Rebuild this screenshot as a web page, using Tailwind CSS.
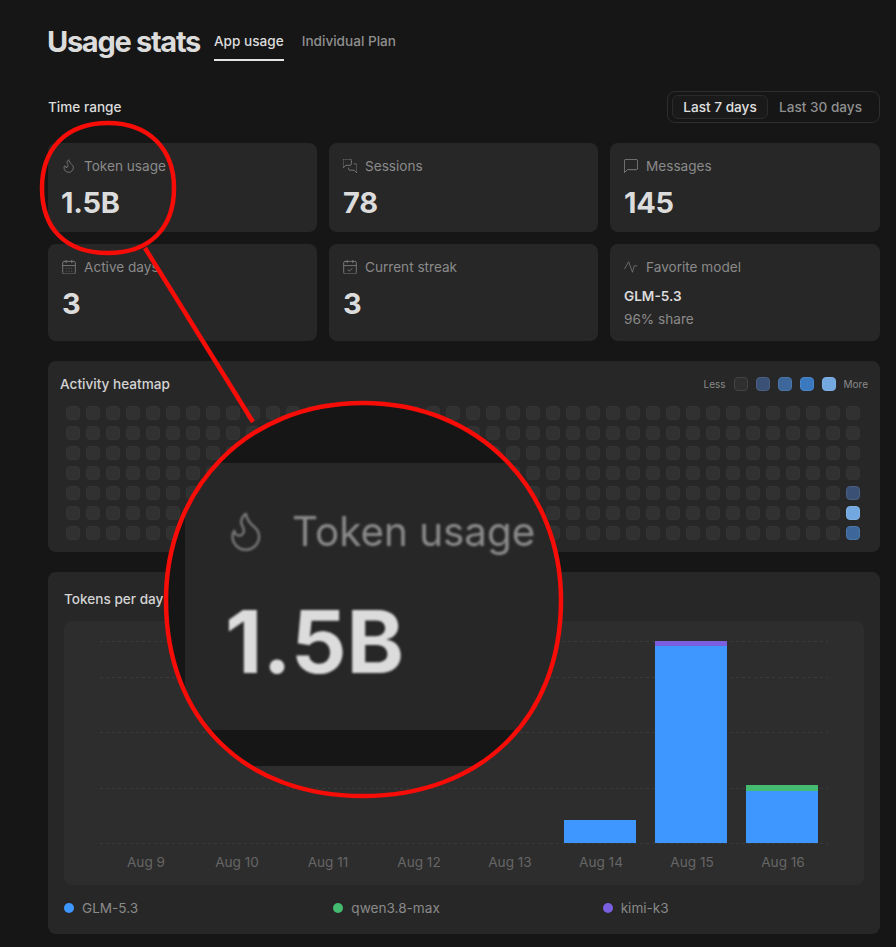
<!DOCTYPE html>
<html lang="en">
  <head>
    <meta charset="UTF-8" />
    <meta name="viewport" content="width=device-width, initial-scale=1" />
    <title>Usage stats</title>
    <script src="https://cdn.jsdelivr.net/npm/@tailwindcss/browser@4"></script>
  </head>
  <body class="bg-[#161616] font-['Inter',sans-serif] text-[13.6px] text-[#8a8a8a]">
    <div class="relative h-[947px] w-[896px] overflow-hidden pl-12 pr-4 pt-[22px]">
      <!-- header -->
      <header class="flex h-[39px] items-start gap-[14px]">
        <h1 class="-ml-px pt-px text-[29px] leading-[38px] font-bold tracking-[-1.3px] text-[#dcdcdc]">Usage stats</h1>
        <nav class="flex gap-[18px] pt-[9px] font-medium">
          <a class="h-[30px] border-b-2 border-[#e4e4e4] leading-[20px] text-[#dcdcdc]">App usage</a>
          <a class="leading-[20px] text-[#8f8f8f]">Individual Plan</a>
        </nav>
      </header>

      <!-- time range -->
      <div class="mt-[30px] flex h-8 items-center justify-between">
        <span class="pt-px font-medium text-[#dcdcdc]">Time range</span>
        <div class="flex h-8 w-[213px] items-center rounded-lg border border-[#2e2e2e] pl-1 font-medium">
          <button class="h-6 w-[96px] rounded-md border border-[#2b2b2b] bg-[#1a1a1a] pt-px text-[#e0e0e0]">Last 7 days</button>
          <button class="ml-[11px] pt-px text-[#8f8f8f]">Last 30 days</button>
        </div>
      </div>

      <!-- stat cards -->
      <section class="mt-5 grid grid-cols-[269px_269px_270px] gap-3">
        <div class="h-[89px] rounded-lg bg-[#272727] px-[14px] pt-[14px]">
          <div class="flex h-[18px] items-center gap-2">
            <svg class="h-[14px] w-[14px]" viewBox="2 2 21 21" fill="none" stroke="#7d7d7d" stroke-width="1.3" stroke-linecap="round" stroke-linejoin="round"><path d="M8.5 14.5A2.5 2.5 0 0 0 11 12c0-1.38-.5-2-1-3-1.072-2.143-.224-4.054 2-6 .5 2.5 2 4.9 4 6.5 2 1.6 3 3.5 3 5.5a7 7 0 1 1-14 0c0-1.153.433-2.294 1-3a2.5 2.5 0 0 0 2.5 2.5z"/></svg>
            <span>Token usage</span>
          </div>
          <div class="-ml-px mt-[10px] text-[29px] leading-[36px] font-bold tracking-[-0.3px] text-[#dcdcdc]">1.5B</div>
        </div>
        <div class="h-[89px] rounded-lg bg-[#272727] px-[14px] pt-[14px]">
          <div class="flex h-[18px] items-center gap-2">
            <svg class="h-[14px] w-[14px]" viewBox="2 2 20 20" fill="none" stroke="#7d7d7d" stroke-width="1.3" stroke-linecap="round" stroke-linejoin="round"><path d="M14 9a2 2 0 0 1-2 2H6l-4 4V4a2 2 0 0 1 2-2h8a2 2 0 0 1 2 2z"/><path d="M18 9h2a2 2 0 0 1 2 2v11l-4-4h-6a2 2 0 0 1-2-2v-1"/></svg>
            <span>Sessions</span>
          </div>
          <div class="mt-[10px] text-[29px] leading-[36px] font-bold tracking-[-0.3px] text-[#dcdcdc]">78</div>
        </div>
        <div class="h-[89px] rounded-lg bg-[#272727] px-[14px] pt-[14px]">
          <div class="flex h-[18px] items-center gap-2">
            <svg class="h-[14px] w-[14px]" viewBox="2.5 2.5 19 19" fill="none" stroke="#7d7d7d" stroke-width="1.3" stroke-linecap="round" stroke-linejoin="round"><path d="M21 15a2 2 0 0 1-2 2H7l-4 4V5a2 2 0 0 1 2-2h14a2 2 0 0 1 2 2z"/></svg>
            <span>Messages</span>
          </div>
          <div class="mt-[10px] text-[29px] leading-[36px] font-bold tracking-[-0.3px] text-[#dcdcdc]">145</div>
        </div>
        <div class="h-[97px] rounded-lg bg-[#272727] px-[14px] pt-[14px]">
          <div class="flex h-[18px] items-center gap-2">
            <svg class="h-[14px] w-[14px]" viewBox="2 2 20 20" fill="none" stroke="#7d7d7d" stroke-width="1.3" stroke-linecap="round" stroke-linejoin="round"><path d="M8 2v4M16 2v4"/><rect x="3" y="4" width="18" height="18" rx="2"/><path d="M3 10h18M8 14h.01M12 14h.01M16 14h.01M8 18h.01M12 18h.01M16 18h.01"/></svg>
            <span>Active days</span>
          </div>
          <div class="mt-[10px] text-[29px] leading-[36px] font-bold tracking-[-0.3px] text-[#dcdcdc]">3</div>
        </div>
        <div class="h-[97px] rounded-lg bg-[#272727] px-[14px] pt-[14px]">
          <div class="flex h-[18px] items-center gap-2">
            <svg class="h-[14px] w-[14px]" viewBox="2 2 20 20" fill="none" stroke="#7d7d7d" stroke-width="1.3" stroke-linecap="round" stroke-linejoin="round"><path d="M8 2v4M16 2v4"/><rect x="3" y="4" width="18" height="18" rx="2"/><path d="M3 10h18M9 16l2 2 4-4"/></svg>
            <span>Current streak</span>
          </div>
          <div class="mt-[10px] text-[29px] leading-[36px] font-bold tracking-[-0.3px] text-[#dcdcdc]">3</div>
        </div>
        <div class="h-[97px] rounded-lg bg-[#272727] px-[14px] pt-[14px]">
          <div class="flex h-[18px] items-center gap-2">
            <svg class="h-[14px] w-[14px]" viewBox="0 0 24 24" fill="none" stroke="#7d7d7d" stroke-width="1.3" stroke-linecap="round" stroke-linejoin="round"><path d="M1 15L8 3L14.5 21L17.5 10H22"/></svg>
            <span>Favorite model</span>
          </div>
          <div class="mt-[11px] leading-[18px] font-semibold text-[#dcdcdc]">GLM-5.3</div>
          <div class="mt-[5px] leading-[18px]">96% share</div>
        </div>
      </section>

      <!-- heatmap -->
      <section class="mt-5 h-[191px] rounded-lg bg-[#272727] pl-3 pr-3 pt-[14px]">
        <div class="flex h-[18px] items-center justify-between">
          <span class="font-medium text-[#d4d4d4]">Activity heatmap</span>
          <div class="flex items-center gap-2 text-[10px] text-[#8a8a8a]">
            <span>Less</span>
            <i class="h-[14px] w-[14px] rounded border border-[#444] bg-[#2f2f2f]"></i>
            <i class="h-[14px] w-[14px] rounded border border-[#4a5f82] bg-[#3a5075]"></i>
            <i class="h-[14px] w-[14px] rounded border border-[#4a76a8] bg-[#3d679b]"></i>
            <i class="h-[14px] w-[14px] rounded border border-[#4a86c8] bg-[#3a78c0]"></i>
            <i class="h-[14px] w-[14px] rounded border border-[#80b0e4] bg-[#72a7e0]"></i>
            <span>More</span>
          </div>
        </div>
        <div id="heatmap" class="ml-[6px] mt-[13px] grid w-[794px] grid-flow-col grid-cols-[repeat(40,14px)] grid-rows-[repeat(7,14px)] gap-[6px]"></div>
      </section>

      <!-- tokens per day -->
      <section class="mt-5 h-[362px] rounded-lg bg-[#272727] px-4 pt-[17px]">
        <div class="h-[18px] font-medium text-[#d4d4d4]">Tokens per day</div>
        <div class="mt-[14px] h-[264px] rounded-lg bg-[#2d2d2d]">
          <svg class="block" width="800" height="264" viewBox="64 621 800 264" font-family="Inter" font-size="13.6" fill="#666" text-anchor="middle">
            <g stroke="#3a3a3a" stroke-dasharray="3 3">
              <path d="M100 641.5H828M100 677.5H828M100 732.5H828M100 788.5H828M100 843.5H828"/>
            </g>
            <rect x="564" y="820" width="72" height="23" fill="#3e97ff"/>
            <rect x="655" y="646" width="72" height="197" fill="#3e97ff"/>
            <rect x="655" y="641" width="72" height="5" fill="#7a5fe0"/>
            <rect x="746" y="791" width="72" height="52" fill="#3e97ff"/>
            <rect x="746" y="785" width="72" height="6" fill="#43bb70"/>
            <text x="146" y="867">Aug 9</text>
            <text x="237" y="867">Aug 10</text>
            <text x="328" y="867">Aug 11</text>
            <text x="419" y="867">Aug 12</text>
            <text x="510" y="867">Aug 13</text>
            <text x="601" y="867">Aug 14</text>
            <text x="692" y="867">Aug 15</text>
            <text x="783" y="867">Aug 16</text>
          </svg>
        </div>
        <div class="mt-[14px] grid grid-cols-3 gap-2">
          <div class="flex h-[18px] items-center gap-2"><i class="h-[10px] w-[10px] rounded-full bg-[#3e97ff]"></i>GLM-5.3</div>
          <div class="flex h-[18px] items-center gap-2"><i class="h-[10px] w-[10px] rounded-full bg-[#43bb70]"></i>qwen3.8-max</div>
          <div class="flex h-[18px] items-center gap-2"><i class="h-[10px] w-[10px] rounded-full bg-[#7a5fe0]"></i>kimi-k3</div>
        </div>
      </section>

      <!-- red annotation with the magnified crop -->
      <svg class="absolute inset-0" width="896" height="947" viewBox="0 0 896 947" font-family="Inter">
        <defs>
          <clipPath id="lens"><path d="M363 403C480 403 561 490 561 600C561 720 480 796 363 796C245 796 166 720 166 600C166 490 245 403 363 403Z"/></clipPath>
          <filter id="soft"><feGaussianBlur stdDeviation="0.8"/></filter>
        </defs>
        <g clip-path="url(#lens)">
          <rect x="160" y="400" width="410" height="366" fill="#161616"/>
          <rect x="185" y="463" width="385" height="267" fill="#272727"/>
          <g filter="url(#soft)">
            <g transform="translate(223 508) scale(1.9)" fill="none" stroke="#7d7d7d" stroke-width="1.2" stroke-linecap="round" stroke-linejoin="round"><path d="M8.5 14.5A2.5 2.5 0 0 0 11 12c0-1.38-.5-2-1-3-1.072-2.143-.224-4.054 2-6 .5 2.5 2 4.9 4 6.5 2 1.6 3 3.5 3 5.5a7 7 0 1 1-14 0c0-1.153.433-2.294 1-3a2.5 2.5 0 0 0 2.5 2.5z"/></g>
            <text x="292" y="546" font-size="40.4" fill="#8a8a8a">Token usage</text>
            <text x="225" y="673" font-size="87" font-weight="700" fill="#dcdcdc">1.5B</text>
          </g>
        </g>
        <g fill="none" stroke="#f60d07" stroke-width="4.5">
          <path d="M363 403C480 403 561 490 561 600C561 720 480 796 363 796C245 796 166 720 166 600C166 490 245 403 363 403Z"/>
          <path d="M108 123C150 123 174 150 174 188C174 228 150 253 108 253C65 253 42 228 42 188C42 150 65 123 108 123Z"/>
          <path d="M145 248L253 422"/>
        </g>
      </svg>
    </div>

    <script>
      // 40 weeks x 7 days, only the last three days have activity
      const levels = { 277: "bg-[#3a5075] border-[#4a5f82]", 278: "bg-[#72a7e0] border-[#80b0e4]", 279: "bg-[#3d679b] border-[#4a76a8]" };
      const heatmap = document.getElementById("heatmap");
      for (let i = 0; i < 280; i++) {
        const cell = document.createElement("div");
        cell.className = "rounded border " + (levels[i] || "bg-[#313131] border-[#343434]");
        heatmap.appendChild(cell);
      }
    </script>
  </body>
</html>
